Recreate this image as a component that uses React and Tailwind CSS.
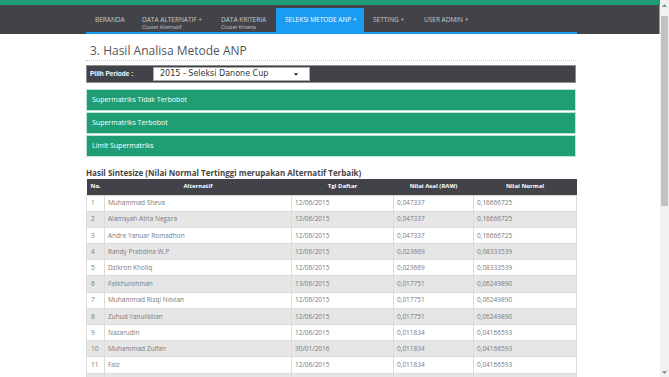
import React from 'react';

const navItems = [
  { label: 'BERANDA', w: 'w-[47px]' },
  { label: 'DATA ALTERNATIF +', sub: 'Cluster Alternatif', w: 'w-[79px]' },
  { label: 'DATA KRITERIA', sub: 'Cluster Kriteria', w: 'w-[64px]' },
  { label: 'SELEKSI METODE ANP +', active: true, w: 'w-[88px]' },
  { label: 'SETTING +', w: 'w-[51px]' },
  { label: 'USER ADMIN +', w: 'w-[64px]' },
];

const panels = ['Supermatriks Tidak Terbobot', 'Supermatriks Terbobot', 'Limit Supermatriks'];

const rows = [
  ['1', 'Muhammad Sheva', '12/06/2015', '0,047337', '0,16666725'],
  ['2', 'Alamsyah Atria Negara', '12/06/2015', '0,047337', '0,16666725'],
  ['3', 'Andre Yanuar Romadhon', '12/06/2015', '0,047337', '0,16666725'],
  ['4', 'Randy Pratidina W.P', '12/06/2015', '0,023669', '0,08333539'],
  ['5', 'Dzikron Kholiq', '12/06/2015', '0,023669', '0,08333539'],
  ['6', 'Fatkhurohman', '13/06/2015', '0,017751', '0,06249890'],
  ['7', 'Muhammad Rizqi Novian', '12/06/2015', '0,017751', '0,06249890'],
  ['8', 'Zuhud Yanulistian', '12/06/2015', '0,017751', '0,06249890'],
  ['9', 'Nazarudin', '12/06/2015', '0,011834', '0,04166593'],
  ['10', 'Muhammad Zulfan', '30/01/2016', '0,011834', '0,04166593'],
  ['11', 'Faiz', '12/06/2015', '0,011834', '0,04166593'],
  ['', '', '', '', ''],
];

export default function App() {
  return (
    <div className="w-[669px] h-[377px] overflow-hidden flex bg-white font-['Open_Sans',sans-serif]">
      <div className="w-[660px]">
        {/* top strip */}
        <div className="h-[5px] bg-[#1f9e75]" />

        {/* navigation */}
        <div className="h-[29px] bg-[#424349] border-r border-[#9a9a9a]">
          <div className="ml-[86px] w-[491px] h-full pt-[3px] flex flex-col">
            <ul className="flex h-[24px]">
              {navItems.map(item => (
                <li
                  key={item.label}
                  className={`${item.w} pl-[9px] pt-[8px] flex flex-col ${item.active ? 'bg-[#1b9cf3] text-white' : 'text-[#c9c9c9]'}`}
                >
                  <span className="text-[6.5px] leading-[8px] whitespace-nowrap">{item.label}</span>
                  {item.sub && <span className="text-[5px] leading-[6px] whitespace-nowrap">{item.sub}</span>}
                </li>
              ))}
            </ul>
            <div className="h-[2px] bg-[#1b9cf3]" />
          </div>
        </div>

        {/* content */}
        <div className="ml-[86px] w-[490px]">
          <div className="pt-[8px] pb-[1px] pl-[4px] border-b border-dotted border-[#c8c8c8]">
            <h1 className="text-[12px] leading-[17px] text-[#555]">3. Hasil Analisa Metode ANP</h1>
          </div>

          <div className="mt-[4px] h-[18px] bg-[#424349] border border-[#8e8e8e] flex items-center">
            <span className="w-[66px] pl-[3px] text-[6.5px] font-bold text-white font-['Liberation_Sans',sans-serif]">Pilih Periode :</span>
            <div className="w-[157px] h-[14px] bg-white border border-[#aaa] flex items-center justify-between pl-[6px] pr-[11px]">
              <span className="text-[8px] text-[#333] font-['DejaVu_Sans',sans-serif] leading-none">2015 - Seleksi Danone Cup</span>
              <svg width="4" height="3" viewBox="0 0 4 3"><path d="M0 0 L4 0 L2 3 Z" fill="#333" /></svg>
            </div>
          </div>

          <div className="mt-[6px] flex flex-col gap-[1px]">
            {panels.map(p => (
              <div key={p} className="h-[22px] bg-[#1f9e75] border border-[#bfe3d5] flex items-center pl-[5px]">
                <span className="text-[7px] text-white">{p}</span>
              </div>
            ))}
          </div>

          <h2 className="mt-[10px] text-[8px] leading-[11px] font-bold text-[#444]">
            Hasil Sintesize (Nilai Normal Tertinggi merupakan Alternatif Terbaik)
          </h2>

          <table className="mt-[1px] w-[490px] table-fixed border-collapse">
            <colgroup>
              <col className="w-[18px]" />
              <col className="w-[187px]" />
              <col className="w-[102px]" />
              <col className="w-[80px]" />
              <col className="w-[103px]" />
            </colgroup>
            <thead>
              <tr className="bg-[#424349] text-white text-[6px] h-[16px]">
                <th className="text-left pl-[4px] font-bold">No.</th>
                <th className="font-bold">Alternatif</th>
                <th className="font-bold">Tgl Daftar</th>
                <th className="font-bold">Nilai Asal (RAW)</th>
                <th className="font-bold">Nilai Normal</th>
              </tr>
            </thead>
            <tbody>
              {rows.map((r, i) => (
                <tr key={i} className={`h-[16.2px] ${i % 2 === 1 ? 'bg-[#e6e6e6]' : 'bg-white'}`}>
                  {r.map((c, j) => (
                    <td key={j} className={`border border-[#dcdcdc] text-[6.5px] text-[#7a7a7a] ${j === 0 ? 'pl-[4px]' : 'pl-[3px]'}`}>{c}</td>
                  ))}
                </tr>
              ))}
            </tbody>
          </table>
        </div>
      </div>

      {/* scrollbar */}
      <div className="w-[9px] h-full bg-[#f1f1f1] flex flex-col items-center">
        <div className="h-[10px] flex items-center justify-center">
          <svg width="5" height="3" viewBox="0 0 5 3"><path d="M0 3 L5 3 L2.5 0 Z" fill="#8a8a8a" /></svg>
        </div>
        <div className="mt-[6px] w-[7px] h-[190px] bg-[#c1c1c1]" />
        <div className="flex-1" />
        <div className="h-[10px] flex items-center justify-center">
          <svg width="5" height="3" viewBox="0 0 5 3"><path d="M0 0 L5 0 L2.5 3 Z" fill="#8a8a8a" /></svg>
        </div>
      </div>
    </div>
  );
}
